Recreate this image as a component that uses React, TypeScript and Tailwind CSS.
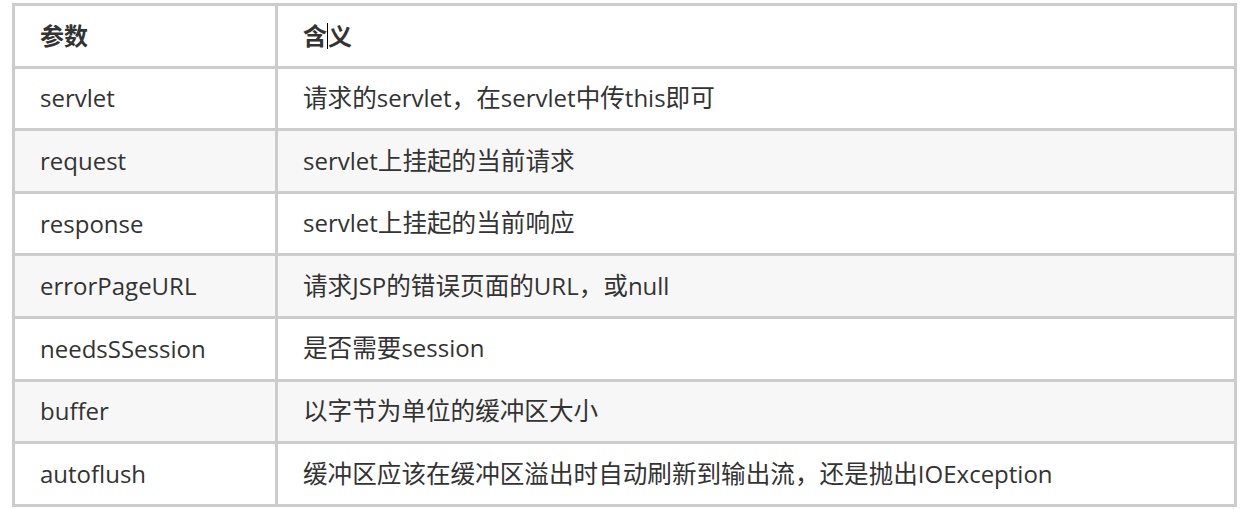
const rows: [string, string][] = [
  ["servlet", "请求的servlet，在servlet中传this即可"],
  ["request", "servlet上挂起的当前请求"],
  ["response", "servlet上挂起的当前响应"],
  ["errorPageURL", "请求JSP的错误页面的URL，或null"],
  ["needsSSession", "是否需要session"],
  ["buffer", "以字节为单位的缓冲区大小"],
  ["autoflush", "缓冲区应该在缓冲区溢出时自动刷新到输出流，还是抛出IOException"],
];

// CJK runs render a touch wider in the original, so give them their own size
function Mixed({ text }: { text: string }) {
  const parts = text.split(/([\u3000-\u9fff\uff00-\uffef]+)/);
  return (
    <>
      {parts.map((p, i) =>
        i % 2 === 1 ? (
          <span key={i} className="text-[24.6px]">
            {p}
          </span>
        ) : (
          p
        )
      )}
    </>
  );
}

export default function App() {
  return (
    <div
      className="w-[1244px] h-[509px] bg-white pt-[3px] pl-[12px] text-[#333] text-[24px]"
      style={{ fontFamily: '"Open Sans", "Noto Sans CJK SC", sans-serif' }}
    >
      <div className="w-[1225px] border-[3px] border-[#cccccc] flex flex-col">
        <div className="flex h-[59.6px] bg-white font-bold">
          <div className="w-[263px] shrink-0 pl-[25px] flex items-center border-r-[3px] border-[#cccccc]">
            参数
          </div>
          <div className="flex-1 pl-[25px] flex items-center">
            含<span className="inline-block w-px h-[26px] bg-black"></span>义
          </div>
        </div>
        {rows.map(([name, desc], i) => (
          <div
            key={name}
            className={
              "flex h-[62.6px] border-t-[3px] border-[#cccccc] " +
              (i % 2 === 1 ? "bg-[#f7f7f7]" : "bg-white")
            }
          >
            <div className="w-[263px] shrink-0 pl-[25px] flex items-center border-r-[3px] border-[#cccccc]">
              {name}
            </div>
            <div className="flex-1 pl-[25px] flex items-center">
              <span>
                <Mixed text={desc} />
              </span>
            </div>
          </div>
        ))}
      </div>
    </div>
  );
}
